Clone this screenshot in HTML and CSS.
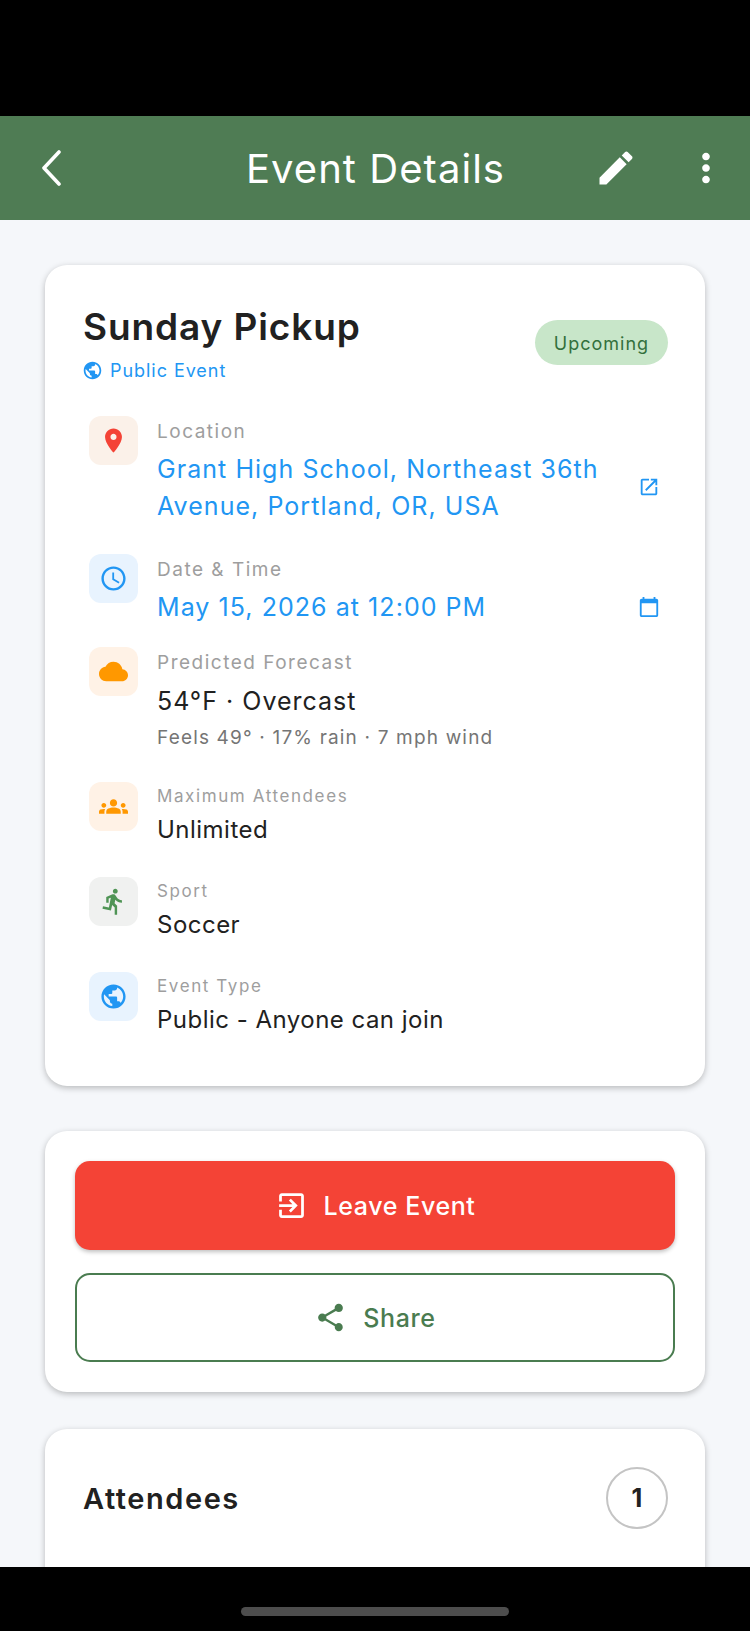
FILE: index.html
```html
<!DOCTYPE html>
<html lang="en">
<head>
  <meta charset="UTF-8">
  <title>Event Details</title>
  <link rel="stylesheet" href="styles.css">
</head>
<body>
  <div class="status-bar"></div>

  <header class="app-bar">
    <svg class="back-icon" viewBox="0 0 20 36"><path d="M18 2 3 18l15 16"/></svg>
    <h1>Event Details</h1>
    <svg class="edit-icon" viewBox="0 0 24 24"><path d="M3 17.25V21h3.75L17.81 9.94l-3.75-3.75L3 17.25zM20.71 7.04c.39-.39.39-1.02 0-1.41l-2.34-2.34c-.39-.39-1.02-.39-1.41 0l-1.83 1.83 3.75 3.75 1.83-1.83z"/></svg>
    <svg class="more-icon" viewBox="0 0 24 24"><path d="M12 8c1.1 0 2-.9 2-2s-.9-2-2-2-2 .9-2 2 .9 2 2 2zm0 2c-1.1 0-2 .9-2 2s.9 2 2 2 2-.9 2-2-.9-2-2-2zm0 6c-1.1 0-2 .9-2 2s.9 2 2 2 2-.9 2-2-.9-2-2-2z"/></svg>
  </header>

  <main class="content">
    <section class="card details-card">
      <div class="event-head">
        <div>
          <h2 class="event-title">Sunday Pickup</h2>
          <div class="event-scope">
            <svg class="scope-icon" viewBox="0 0 24 24"><path d="M12 2C6.48 2 2 6.48 2 12s4.48 10 10 10 10-4.48 10-10S17.52 2 12 2zm-1 17.93c-3.95-.49-7-3.85-7-7.93 0-.62.08-1.21.21-1.79L9 15v1c0 1.1.9 2 2 2v1.93zm6.9-2.54c-.26-.81-1-1.39-1.9-1.39h-1v-3c0-.55-.45-1-1-1H8v-2h2c.55 0 1-.45 1-1V7h2c1.1 0 2-.9 2-2v-.41c2.93 1.19 5 4.06 5 7.41 0 2.08-.8 3.97-2.1 5.39z"/></svg>
            Public Event
          </div>
        </div>
        <span class="status-chip">Upcoming</span>
      </div>

      <div class="info-row row-location">
        <div class="info-icon tint-peach red">
          <svg viewBox="0 0 24 24"><path d="M12 2C8.13 2 5 5.13 5 9c0 5.25 7 13 7 13s7-7.75 7-13c0-3.87-3.13-7-7-7zm0 9.5c-1.38 0-2.5-1.12-2.5-2.5s1.12-2.5 2.5-2.5 2.5 1.12 2.5 2.5-1.12 2.5-2.5 2.5z"/></svg>
        </div>
        <div class="info-text">
          <div class="info-label">Location</div>
          <div class="info-value link">Grant High School, Northeast 36th Avenue, Portland, OR, USA</div>
        </div>
        <svg class="action-icon" viewBox="0 0 24 24"><path d="M19 19H5V5h7V3H5c-1.11 0-2 .9-2 2v14c0 1.1.89 2 2 2h14c1.1 0 2-.9 2-2v-7h-2v7zM14 3v2h3.59l-9.83 9.83 1.41 1.41L19 6.41V10h2V3h-7z"/></svg>
      </div>

      <div class="info-row row-date">
        <div class="info-icon tint-blue blue">
          <svg viewBox="0 0 24 24"><path d="M11.99 2C6.47 2 2 6.48 2 12s4.47 10 9.99 10C17.52 22 22 17.52 22 12S17.52 2 11.99 2zM12 20c-4.42 0-8-3.58-8-8s3.58-8 8-8 8 3.58 8 8-3.58 8-8 8zm.5-13H11v6l5.25 3.15.75-1.23-4.5-2.67z"/></svg>
        </div>
        <div class="info-text">
          <div class="info-label">Date &amp; Time</div>
          <div class="info-value link">May 15, 2026 at 12:00 PM</div>
        </div>
        <svg class="action-icon" viewBox="0 0 24 24"><path d="M20 3h-1V1h-2v2H7V1H5v2H4c-1.1 0-2 .9-2 2v16c0 1.1.9 2 2 2h16c1.1 0 2-.9 2-2V5c0-1.1-.9-2-2-2zm0 18H4V8h16v13z"/></svg>
      </div>

      <div class="info-row row-forecast">
        <div class="info-icon tint-orange orange">
          <svg viewBox="0 0 24 24"><path d="M19.35 10.04C18.67 6.59 15.64 4 12 4 9.11 4 6.6 5.64 5.35 8.04 2.34 8.36 0 10.91 0 14c0 3.31 2.69 6 6 6h13c2.76 0 5-2.24 5-5 0-2.64-2.05-4.78-4.65-4.96z"/></svg>
        </div>
        <div class="info-text">
          <div class="info-label">Predicted Forecast</div>
          <div class="info-value">54°F · Overcast</div>
          <div class="info-sub">Feels 49° · 17% rain · 7 mph wind</div>
        </div>
      </div>

      <div class="info-row compact">
        <div class="info-icon tint-orange orange">
          <svg viewBox="0 0 24 24"><path d="M12 12.75c1.63 0 3.07.39 4.24.9 1.08.48 1.76 1.56 1.76 2.73V18H6v-1.61c0-1.18.68-2.26 1.76-2.73 1.17-.52 2.61-.91 4.24-.91zM4 13c1.1 0 2-.9 2-2s-.9-2-2-2-2 .9-2 2 .9 2 2 2zm1.13 1.1C4.76 14.04 4.39 14 4 14c-.99 0-1.93.21-2.78.58C.48 14.9 0 15.62 0 16.43V18h4.5v-1.61c0-.83.23-1.61.63-2.29zM20 13c1.1 0 2-.9 2-2s-.9-2-2-2-2 .9-2 2 .9 2 2 2zm4 3.43c0-.81-.48-1.53-1.22-1.85-.85-.37-1.79-.58-2.78-.58-.39 0-.76.04-1.13.1.4.68.63 1.46.63 2.29V18H24v-1.57zM12 6c1.66 0 3 1.34 3 3s-1.34 3-3 3-3-1.34-3-3 1.34-3 3-3z"/></svg>
        </div>
        <div class="info-text">
          <div class="info-label">Maximum Attendees</div>
          <div class="info-value">Unlimited</div>
        </div>
      </div>

      <div class="info-row compact">
        <div class="info-icon tint-grey green">
          <svg viewBox="0 0 24 24"><path d="M13.49 5.48c1.1 0 2-.9 2-2s-.9-2-2-2-2 .9-2 2 .9 2 2 2zm-3.6 13.9l1-4.4 2.1 2v6h2v-7.5l-2.1-2 .6-3c1.3 1.5 3.3 2.5 5.5 2.5v-2c-1.9 0-3.5-1-4.3-2.4l-1-1.6c-.4-.6-1-1-1.7-1-.3 0-.5.1-.8.1l-5.2 2.2v4.7h2v-3.4l1.8-.7-1.6 8.1-4.9-1-.4 2 7 1.4z"/></svg>
        </div>
        <div class="info-text">
          <div class="info-label">Sport</div>
          <div class="info-value">Soccer</div>
        </div>
      </div>

      <div class="info-row compact">
        <div class="info-icon tint-blue blue">
          <svg viewBox="0 0 24 24"><path d="M12 2C6.48 2 2 6.48 2 12s4.48 10 10 10 10-4.48 10-10S17.52 2 12 2zm-1 17.93c-3.95-.49-7-3.85-7-7.93 0-.62.08-1.21.21-1.79L9 15v1c0 1.1.9 2 2 2v1.93zm6.9-2.54c-.26-.81-1-1.39-1.9-1.39h-1v-3c0-.55-.45-1-1-1H8v-2h2c.55 0 1-.45 1-1V7h2c1.1 0 2-.9 2-2v-.41c2.93 1.19 5 4.06 5 7.41 0 2.08-.8 3.97-2.1 5.39z"/></svg>
        </div>
        <div class="info-text">
          <div class="info-label">Event Type</div>
          <div class="info-value">Public - Anyone can join</div>
        </div>
      </div>
    </section>

    <section class="card actions-card">
      <button class="btn btn-leave">
        <svg viewBox="0 0 24 24"><path d="M10.09 15.59L11.5 17l5-5-5-5-1.41 1.41L12.67 11H3v2h9.67l-2.58 2.59zM19 3H5c-1.11 0-2 .9-2 2v4h2V5h14v14H5v-4H3v4c0 1.1.89 2 2 2h14c1.1 0 2-.9 2-2V5c0-1.1-.9-2-2-2z"/></svg>
        Leave Event
      </button>
      <button class="btn btn-share">
        <svg viewBox="0 0 24 24"><path d="M18 16.08c-.76 0-1.44.3-1.96.77L8.91 12.7c.05-.23.09-.46.09-.7s-.04-.47-.09-.7l7.05-4.11c.54.5 1.25.81 2.04.81 1.66 0 3-1.34 3-3s-1.34-3-3-3-3 1.34-3 3c0 .24.04.47.09.7L8.04 9.81C7.5 9.31 6.79 9 6 9c-1.66 0-3 1.34-3 3s1.34 3 3 3c.79 0 1.5-.31 2.04-.81l7.12 4.16c-.05.21-.08.43-.08.65 0 1.61 1.31 2.92 2.92 2.92 1.61 0 2.92-1.31 2.92-2.92s-1.31-2.92-2.92-2.92z"/></svg>
        Share
      </button>
    </section>

    <section class="card attendees-card">
      <h2 class="attendees-title">Attendees</h2>
      <span class="count-circle">1</span>
    </section>
  </main>

  <div class="nav-bar"><span class="home-pill"></span></div>
</body>
</html>
```

FILE: styles.css
```css
* {
  box-sizing: border-box;
}
html, body {
  height: 100%;
}
body {
  margin: 0;
  height: 1631px;
  display: flex;
  flex-direction: column;
  overflow: hidden;
  background-color: #f5f7fa;
  font-family: Inter, "Liberation Sans", sans-serif;
  color: #212121;
}
svg {
  fill: currentColor;
  display: block;
  flex-shrink: 0;
}
h1, h2 {
  margin: 0;
}

.status-bar {
  height: 116px;
  background-color: #000;
  flex-shrink: 0;
}

.app-bar {
  height: 104px;
  flex-shrink: 0;
  display: flex;
  align-items: center;
  padding: 0 21px 0 41px;
  background-color: #4f7c54;
  color: #fff;
}
.app-bar h1 {
  flex: 1;
  text-align: center;
  font-size: 40px;
  font-weight: 400;
  letter-spacing: 1.05px;
  padding-left: 96px;
}
.back-icon {
  width: 20px;
  height: 36px;
  fill: none;
  stroke: #fff;
  stroke-width: 3.6;
  stroke-linecap: round;
  stroke-linejoin: round;
}
.edit-icon {
  width: 44px;
  height: 44px;
  margin-right: 45px;
}
.more-icon {
  width: 46px;
  height: 46px;
}

.content {
  flex: 1;
  min-height: 0;
  overflow: hidden;
  padding: 45px 45px 0;
}
.card {
  background-color: #fff;
  border-radius: 22px;
  box-shadow: 0 2px 6px rgba(0, 0, 0, 0.25);
}

.details-card {
  height: 821px;
  padding: 38px 38px 0;
  margin-bottom: 45px;
}
.event-head {
  display: flex;
  justify-content: space-between;
  align-items: flex-start;
  height: 113px;
}
.event-title {
  font-size: 37px;
  font-weight: 600;
  line-height: 48px;
  letter-spacing: 0.9px;
}
.event-scope {
  display: flex;
  align-items: center;
  gap: 7px;
  margin-top: 9px;
  margin-left: -1px;
  font-size: 18px;
  letter-spacing: 0.95px;
  color: #2196f3;
}
.scope-icon {
  width: 21px;
  height: 21px;
}
.status-chip {
  width: 133px;
  height: 45px;
  margin: 17px -1px 0 0;
  border-radius: 23px;
  background-color: #c8e6c9;
  color: #33703c;
  font-size: 18px;
  letter-spacing: 1px;
  line-height: 47px;
  text-align: center;
}

.info-row {
  display: flex;
  align-items: flex-start;
  padding: 0 7px 0 6px;
}
.row-location {
  height: 138px;
}
.row-date {
  height: 93px;
}
.row-forecast {
  height: 135px;
}
.compact {
  height: 95px;
}
.info-icon {
  width: 49px;
  height: 49px;
  margin-right: 19px;
  border-radius: 12px;
  display: flex;
  align-items: center;
  justify-content: center;
  flex-shrink: 0;
}
.info-icon svg {
  width: 29px;
  height: 29px;
}
.tint-peach { background-color: #fbf1e9; }
.tint-blue { background-color: #e8f3fe; }
.tint-orange { background-color: #fff2e6; }
.tint-grey { background-color: #f0f1f0; }
.red { color: #f44336; }
.blue { color: #2196f3; }
.orange { color: #ff9800; }
.green { color: #4f9455; }

.info-text {
  flex: 1;
  padding-top: 4px;
}
.info-label {
  font-size: 19px;
  line-height: 24px;
  letter-spacing: 1.5px;
  color: #9e9e9e;
}
.info-value {
  margin-top: 7px;
  font-size: 25px;
  line-height: 37px;
  letter-spacing: 1.05px;
  color: #212121;
}
.info-value.link {
  color: #2196f3;
}
.info-sub {
  margin-top: 6px;
  font-size: 19px;
  line-height: 24px;
  letter-spacing: 1.17px;
  color: #757575;
}
.row-forecast .info-value {
  margin-top: 8px;
  letter-spacing: 1px;
}
.compact .info-label {
  font-size: 17px;
  letter-spacing: 1.6px;
}
.compact .info-text {
  padding-top: 2px;
}
.compact .info-value {
  margin-top: 3px;
  font-size: 24px;
  letter-spacing: 0.48px;
}
.action-icon {
  width: 22px;
  height: 22px;
  margin-left: 25px;
  color: #2196f3;
}
.row-location .action-icon {
  margin-top: 60px;
}
.row-date .action-icon {
  margin-top: 42px;
}

.actions-card {
  height: 261px;
  padding: 30px;
  display: flex;
  flex-direction: column;
  gap: 23px;
  margin-bottom: 37px;
}
.btn {
  height: 89px;
  display: flex;
  align-items: center;
  justify-content: center;
  gap: 16px;
  border-radius: 15px;
  border: none;
  font-family: inherit;
  font-size: 25px;
  font-weight: 500;
  letter-spacing: 0.6px;
}
.btn svg {
  width: 33px;
  height: 33px;
}
.btn-leave {
  background-color: #f44336;
  color: #fff;
  box-shadow: 0 2px 4px rgba(0, 0, 0, 0.25);
}
.btn-share {
  background-color: #fff;
  color: #4a7c50;
  border: 2px solid #4a7c50;
}

.attendees-card {
  height: 300px;
  padding: 38px 37px 38px 38px;
  display: flex;
  justify-content: space-between;
  align-items: flex-start;
}
.attendees-title {
  font-size: 29px;
  font-weight: 600;
  line-height: 64px;
  letter-spacing: 1.55px;
}
.count-circle {
  width: 62px;
  height: 62px;
  border: 2px solid #c4c4c4;
  border-radius: 50%;
  font-size: 25px;
  font-weight: 700;
  line-height: 58px;
  text-align: center;
}

.nav-bar {
  height: 64px;
  flex-shrink: 0;
  background-color: #000;
  display: flex;
  justify-content: center;
  padding-top: 40px;
}
.home-pill {
  width: 268px;
  height: 9px;
  border-radius: 5px;
  background-color: #4d4d4d;
}
```
